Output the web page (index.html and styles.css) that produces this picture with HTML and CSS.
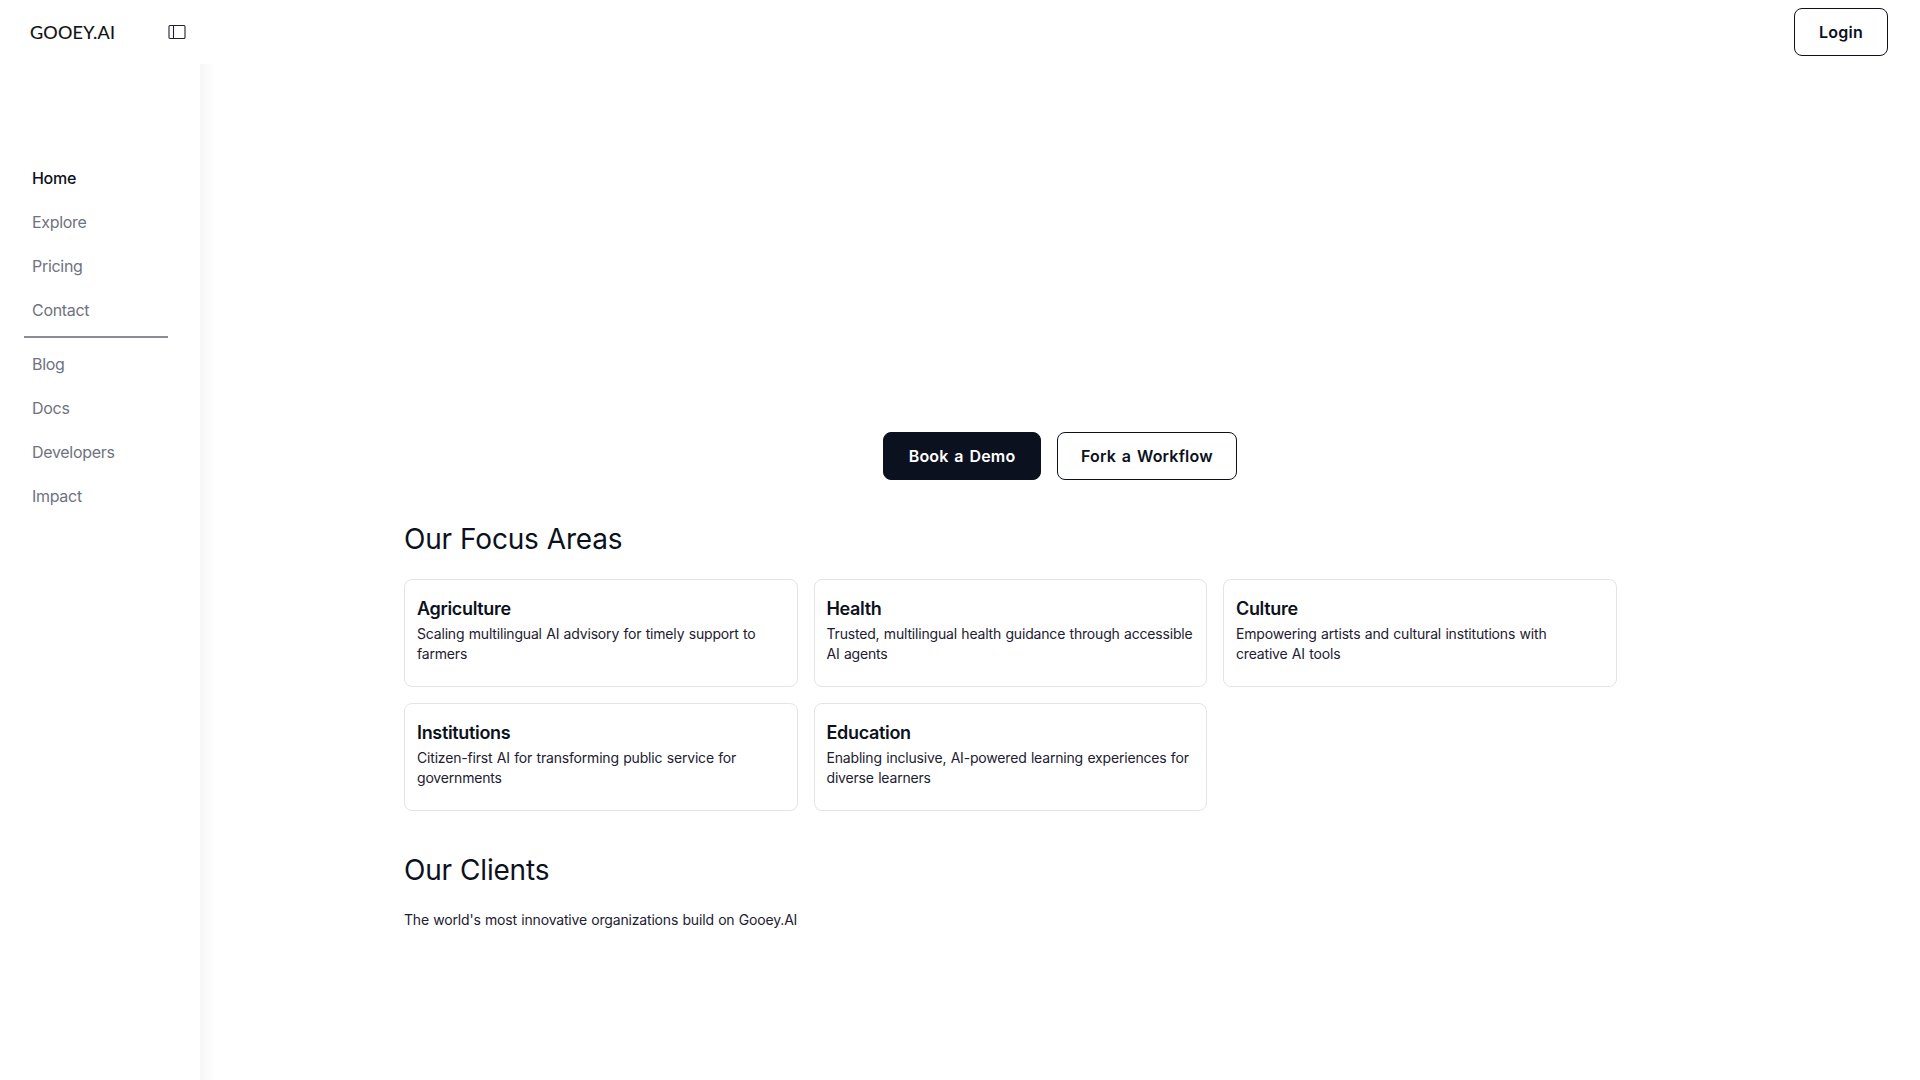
FILE: index.html
```html
<!DOCTYPE html>
<html lang="en">
<head>
    <meta charset="UTF-8">
    <meta name="viewport" content="width=device-width, initial-scale=1.0">
    <title>Gooey.AI</title>
    <link rel="stylesheet" href="styles.css">
</head>
<body>
    <header class="topbar">
        <div class="brand">
            <a class="logo">GOOEY.AI</a>
            <svg class="toggle" width="18" height="16" viewBox="0 0 18 16" fill="none" stroke="#1f2230" stroke-width="1.1">
                <rect x="1" y="1.5" width="16" height="13" rx="1"/>
                <line x1="5.5" y1="1.5" x2="5.5" y2="14.5"/>
            </svg>
        </div>
        <button class="btn btn-login" type="button">Login</button>
    </header>
    <div class="layout">
        <nav class="sidebar">
            <a class="nav-item active">Home</a>
            <a class="nav-item">Explore</a>
            <a class="nav-item">Pricing</a>
            <a class="nav-item">Contact</a>
            <hr class="nav-divider">
            <a class="nav-item">Blog</a>
            <a class="nav-item">Docs</a>
            <a class="nav-item">Developers</a>
            <a class="nav-item">Impact</a>
        </nav>
        <main class="content">
            <div class="hero-actions">
                <button class="btn btn-primary" type="button">Book a Demo</button>
                <button class="btn btn-outline" type="button">Fork a Workflow</button>
            </div>
            <section class="section">
                <h2>Our Focus Areas</h2>
                <div class="card-grid">
                    <div class="card">
                        <h3>Agriculture</h3>
                        <p>Scaling multilingual AI advisory for timely support to farmers</p>
                    </div>
                    <div class="card">
                        <h3>Health</h3>
                        <p>Trusted, multilingual health guidance through accessible AI agents</p>
                    </div>
                    <div class="card">
                        <h3>Culture</h3>
                        <p>Empowering artists and cultural institutions with<br>creative AI tools</p>
                    </div>
                    <div class="card">
                        <h3>Institutions</h3>
                        <p>Citizen-first AI for transforming public service for governments</p>
                    </div>
                    <div class="card">
                        <h3>Education</h3>
                        <p>Enabling inclusive, AI-powered learning experiences for diverse learners</p>
                    </div>
                </div>
            </section>
            <section class="section clients">
                <h2>Our Clients</h2>
                <p class="clients-text">The world's most innovative organizations build on Gooey.AI</p>
            </section>
        </main>
    </div>
</body>
</html>
```

FILE: styles.css
```css
* {
    box-sizing: border-box;
}
body {
    margin: 0;
    height: 1080px;
    overflow: hidden;
    background-color: #ffffff;
    color: #0c1120;
    font-family: 'Inter', sans-serif;
}
.topbar {
    height: 64px;
    display: flex;
    justify-content: space-between;
    align-items: center;
    padding: 0 32px 0 30px;
}
.brand {
    display: flex;
    align-items: center;
    gap: 53px;
}
.logo {
    font-family: 'Lato', sans-serif;
    font-size: 18px;
    letter-spacing: 0.2px;
    color: #111111;
    -webkit-text-stroke: 0.15px #111111;
}
.toggle {
    display: block;
}
.btn {
    height: 48px;
    padding: 0 24px;
    border: 1px solid #0c1120;
    border-radius: 8px;
    background-color: #ffffff;
    color: #0c1120;
    font-family: 'Inter', sans-serif;
    font-size: 16px;
    font-weight: 600;
    letter-spacing: 0.2px;
    word-spacing: 1.5px;
}
.btn-login {
    width: 94px;
    padding: 0;
}
.btn-primary {
    padding: 0 24.5px;
    background-color: #0c1120;
    color: #ffffff;
}
.btn-outline {
    padding: 0 23px;
}
.layout {
    display: flex;
    height: 1016px;
}
.sidebar {
    width: 200px;
    flex-shrink: 0;
    padding: 92px 32px 0 24px;
    display: flex;
    flex-direction: column;
}
.nav-item {
    height: 44px;
    padding-left: 8px;
    display: flex;
    align-items: center;
    font-size: 16px;
    letter-spacing: -0.3px;
    color: #6f7280;
}
.nav-item.active {
    color: #0c1120;
    font-weight: 500;
}
.nav-divider {
    width: 144px;
    margin: 4px 0 4px;
    border: none;
    border-top: 2px solid #8b8c96;
}
.content {
    flex: 1;
    padding-top: 368px;
    background: linear-gradient(to right, #f6f6f7, #ffffff 16px);
}
.hero-actions {
    display: flex;
    justify-content: center;
    gap: 16px;
}
.section {
    margin-left: 204px;
    width: 1212.5px;
}
h2 {
    margin: 0;
    font-size: 28px;
    font-weight: 400;
    line-height: 36px;
    letter-spacing: -0.2px;
    word-spacing: 0.5px;
}
.section h2 {
    padding-top: 41px;
}
.card-grid {
    margin-top: 22px;
    display: grid;
    grid-template-columns: repeat(3, 1fr);
    gap: 16px;
}
.card {
    height: 108px;
    padding: 17px 12px;
    border: 1px solid #e3e4e8;
    border-radius: 8px;
}
.card h3 {
    margin: 0;
    font-size: 18px;
    font-weight: 600;
    line-height: 24px;
    letter-spacing: -0.33px;
}
.card p {
    margin: 3px 0 0;
    font-size: 14px;
    line-height: 20px;
    letter-spacing: -0.18px;
    word-spacing: 0.6px;
    color: #1c2030;
}
.clients-text {
    margin: 22px 0 0;
    font-size: 14px;
    line-height: 20px;
    letter-spacing: -0.18px;
    word-spacing: 0.6px;
    color: #1c2030;
}
```
